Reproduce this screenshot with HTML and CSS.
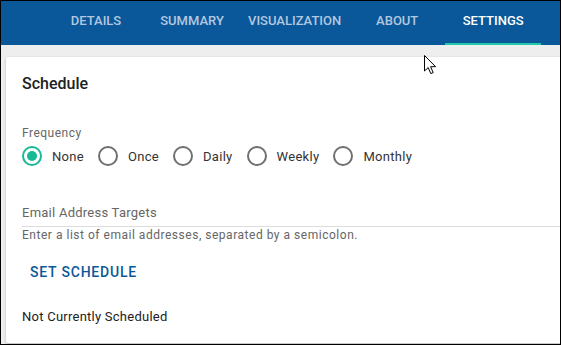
FILE: index.html
```html
<!DOCTYPE html>
<html lang="en">
<head>
  <meta charset="UTF-8">
  <meta name="viewport" content="width=device-width, initial-scale=1.0">
  <title>Report | Settings</title>
  <link rel="stylesheet" href="styles.css">
</head>
<body>
  <div class="frame">

    <div class="tabbar">
      <div class="tab">Details</div>
      <div class="tab">Summary</div>
      <div class="tab">Visualization</div>
      <div class="tab">About</div>
      <div class="tab active">Settings</div>
    </div>

    <div class="main">
      <div class="card">
        <h2 class="card-title">Schedule</h2>

        <div class="field-label">Frequency</div>
        <div class="radio-group">
          <label class="radio checked"><span class="ring"></span>None</label>
          <label class="radio"><span class="ring"></span>Once</label>
          <label class="radio"><span class="ring"></span>Daily</label>
          <label class="radio"><span class="ring"></span>Weekly</label>
          <label class="radio"><span class="ring"></span>Monthly</label>
        </div>

        <div class="text-field">
          <div class="text-field-label">Email Address Targets</div>
        </div>
        <div class="helper">Enter a list of email addresses, separated by a semicolon.</div>

        <button class="text-button" type="button">Set Schedule</button>

        <div class="status">Not Currently Scheduled</div>
      </div>
    </div>

    <svg class="cursor" width="13" height="20" viewBox="0 0 13 20">
      <path d="M0.5 0.5 L0.5 16 L4.2 12.6 L6.8 18.6 L9.2 17.6 L6.6 11.7 L11.6 11.7 Z" fill="#fff" stroke="#000" stroke-width="1"/>
    </svg>
  </div>
</body>
</html>
```

FILE: styles.css
```css
* {
  box-sizing: border-box;
}
body {
  margin: 0;
  font-family: Roboto, "Liberation Sans", Arial, sans-serif;
  background: #fff;
}
.frame {
  position: relative;
  width: 561px;
  height: 345px;
  border: 1px solid #000;
  background: #eeeeee;
  display: flex;
  flex-direction: column;
  overflow: hidden;
}
.tabbar {
  height: 44px;
  flex-shrink: 0;
  background: #0a5799;
  display: flex;
  padding-left: 47px;
}
.tab {
  min-width: 96px;
  padding: 0 8px 4px;
  display: flex;
  align-items: center;
  justify-content: center;
  font-size: 13px;
  font-weight: 500;
  letter-spacing: 0;
  text-transform: uppercase;
  color: #b3c8e0;
  border-bottom: 2px solid transparent;
}
.tab.active {
  color: #fff;
  border-bottom-color: #1ec8a9;
}
.main {
  flex: 1;
  display: flex;
  padding: 12px 0 1px 5px;
}
.card {
  flex: 1;
  margin-right: -10px;
  background: #fff;
  border-radius: 2px;
  box-shadow: 0 1px 3px rgba(0, 0, 0, 0.25);
  padding: 17px 0 0 16px;
  color: #212121;
}
.card-title {
  margin: 0;
  font-size: 16px;
  line-height: 20px;
  font-weight: 500;
}
.field-label {
  margin-top: 31px;
  font-size: 12px;
  line-height: 16px;
  letter-spacing: 0.5px;
  color: #666;
}
.radio-group {
  margin-top: 3px;
  height: 24px;
  display: flex;
  align-items: center;
}
.radio {
  display: flex;
  align-items: center;
  gap: 10px;
  margin-right: 14px;
  font-size: 13px;
  letter-spacing: 0.3px;
  color: #333;
}
.ring {
  width: 20px;
  height: 20px;
  border-radius: 50%;
  border: 2px solid #707070;
  display: flex;
  align-items: center;
  justify-content: center;
}
.radio.checked .ring {
  border-color: #17b996;
}
.radio.checked .ring::after {
  content: "";
  width: 10px;
  height: 10px;
  border-radius: 50%;
  background: #17b996;
}
.text-field {
  margin-top: 37px;
  padding-bottom: 5px;
  border-bottom: 1px solid #dcdcdc;
}
.text-field-label {
  font-size: 13px;
  line-height: 16px;
  letter-spacing: 0.25px;
  color: #666;
}
.helper {
  font-size: 12px;
  line-height: 16px;
  color: #666;
  letter-spacing: 0.52px;
}
.text-button {
  display: block;
  margin-top: 11px;
  height: 36px;
  padding: 0 8px;
  border: none;
  background: none;
  font-family: inherit;
  font-size: 14px;
  font-weight: 500;
  letter-spacing: 0.8px;
  text-transform: uppercase;
  color: #0b5899;
  cursor: pointer;
}
.status {
  margin-top: 19px;
  font-size: 13px;
  line-height: 16px;
  letter-spacing: 0.25px;
}
.cursor {
  position: absolute;
  left: 423px;
  top: 54px;
}
```
